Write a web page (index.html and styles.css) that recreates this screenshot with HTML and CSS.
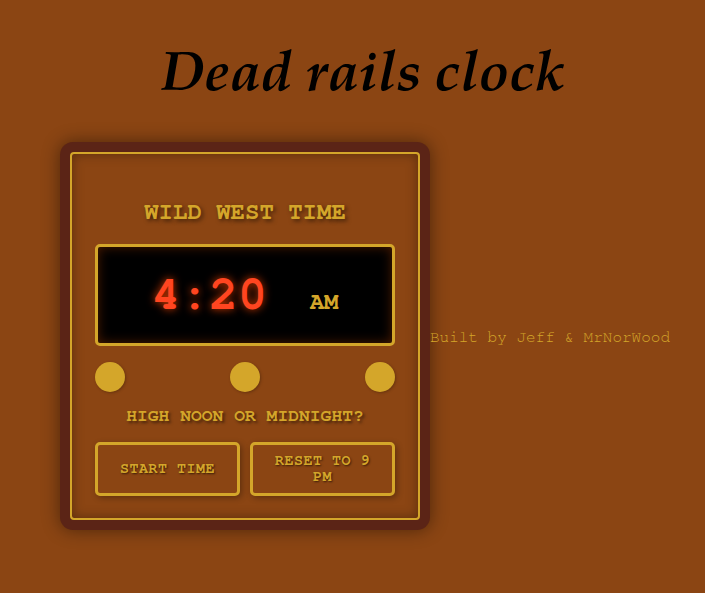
FILE: index.html
```html
<!DOCTYPE html>
<html lang="en">
<head>
<meta charset="utf-8">
<title>Dead rails clock</title>
<link rel="stylesheet" href="styles.css">
</head>
<body>
  <h1 class="title">Dead rails clock</h1>
  <div class="row">
    <div class="frame">
      <div class="panel">
        <h2 class="panel-title">WILD WEST TIME</h2>
        <div class="display">
          <span class="time">4:20</span>
          <span class="ampm">AM</span>
        </div>
        <div class="dots">
          <span class="dot"></span>
          <span class="dot"></span>
          <span class="dot"></span>
        </div>
        <p class="question">HIGH NOON OR MIDNIGHT?</p>
        <div class="buttons">
          <button class="btn">START TIME</button>
          <button class="btn">RESET TO 9 PM</button>
        </div>
      </div>
    </div>
    <p class="credit">Built by Jeff &amp; MrNorWood</p>
  </div>
</body>
</html>
```
FILE: styles.css
```css
html, body {
  margin: 0;
  padding: 0;
}
body {
  background: #8b4513;
  font-family: "Nimbus Mono PS", "Nimbus Mono L", "FreeMono", "Courier 10 Pitch", "Courier", "Liberation Mono", monospace;
  width: 705px;
  height: 593px;
  overflow: hidden;
}
.title {
  margin: 40px 0 28px;
  padding-left: 22px;
  text-align: center;
  font-family: "URW Palladio L", "P052", "Palatino Linotype", "Palatino", "TeX Gyre Pagella", "Liberation Serif", serif;
  font-style: italic;
  font-weight: bold;
  font-size: 56px;
  color: #000;
  line-height: 74px;
}
.row {
  display: flex;
  align-items: center;
  padding-left: 60px;
}
.frame {
  width: 370px;
  box-sizing: border-box;
  padding: 10px;
  background: #5b2416;
  border-radius: 13px;
  box-shadow: 0 0 18px rgba(0, 0, 0, 0.45);
}
.panel {
  border: 2px solid #d4a62a;
  border-radius: 4px;
  background: #8b4513;
  box-shadow: inset 0 0 12px rgba(0, 0, 0, 0.35);
  padding: 24px 23px 22px;
  display: flex;
  flex-direction: column;
}
.panel-title {
  margin: 21px 0 18px;
  text-align: center;
  font-size: 24px;
  font-weight: bold;
  color: #d4a62a;
  text-shadow: 2px 2px 4px rgba(0, 0, 0, 0.55);
  line-height: 27px;
}
.display {
  background: #000;
  border: 3px solid #d4a62a;
  border-radius: 5px;
  box-shadow: inset 0 0 12px rgba(255, 90, 0, 0.3);
  padding: 21px 0;
  display: flex;
  justify-content: center;
  align-items: baseline;
  gap: 43px;
}
.time {
  font-size: 48px;
  font-weight: bold;
  line-height: 54px;
  color: #ff4520;
  text-shadow: 0 0 8px rgba(255, 69, 0, 0.85);
}
.ampm {
  font-size: 24px;
  font-weight: bold;
  color: #d4a62a;
}
.dots {
  display: flex;
  justify-content: space-between;
  margin-top: 16px;
}
.dot {
  width: 30px;
  height: 30px;
  border-radius: 50%;
  background: #d4a62a;
  box-shadow: 1px 1px 3px rgba(0, 0, 0, 0.25);
}
.question {
  margin: 14px 0 16px;
  text-align: center;
  font-size: 18px;
  font-weight: bold;
  line-height: 20px;
  color: #d4a62a;
  text-shadow: 2px 2px 3px rgba(0, 0, 0, 0.5);
}
.buttons {
  display: flex;
  gap: 10px;
}
.btn {
  flex: 1;
  background: #8b4513;
  border: 3px solid #d4a62a;
  border-radius: 5px;
  padding: 8px 16px;
  font-family: "Nimbus Mono PS", "Nimbus Mono L", "FreeMono", "Courier 10 Pitch", "Courier", "Liberation Mono", monospace;
  font-size: 15px;
  font-weight: bold;
  line-height: 16px;
  letter-spacing: 0.5px;
  color: #d4a62a;
  text-shadow: 1px 1px 2px rgba(0, 0, 0, 0.6);
  box-shadow: 2px 2px 6px rgba(0, 0, 0, 0.3);
  min-height: 54px;
}
.credit {
  margin: 2px 0 0;
  font-size: 16px;
  color: #d4a62a;
}
```
